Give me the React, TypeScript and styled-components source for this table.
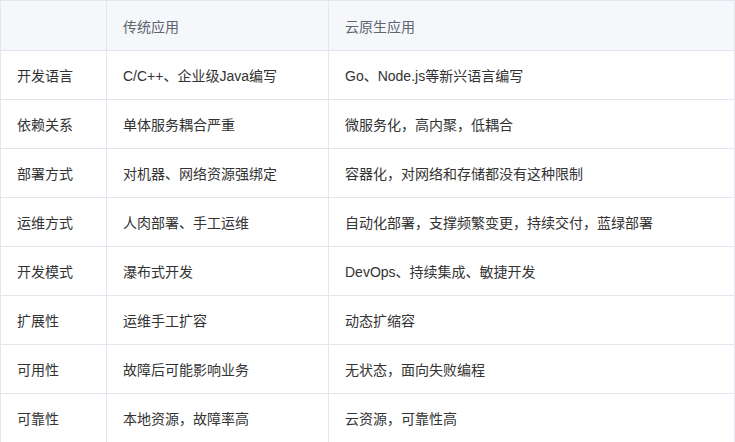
import React from "react";
import styled, { createGlobalStyle } from "styled-components";

const Global = createGlobalStyle`
  html, body { margin: 0; padding: 0; background: #ffffff; }
  body { font-family: "Liberation Sans", "Noto Sans CJK SC", sans-serif; }
`;

const Table = styled.table`
  border-collapse: collapse;
  table-layout: fixed;
  width: 734px;
  font-size: 14px;
  color: #333333;
`;

const Col = styled.col<{ $w: number }>`
  width: ${(p) => p.$w}px;
`;

const HeadCell = styled.th`
  height: 50px;
  padding: 0 16px;
  text-align: left;
  font-weight: normal;
  color: #5e6470;
  background: #f5f7fa;
  border: 1px solid #e3e6ee;
  box-sizing: border-box;
`;

const Cell = styled.td`
  height: 49px;
  padding: 0 16px;
  text-align: left;
  border: 1px solid #e3e6ee;
  box-sizing: border-box;
  white-space: nowrap;
`;

const rows: [string, string, string][] = [
  ["开发语言", "C/C++、企业级Java编写", "Go、Node.js等新兴语言编写"],
  ["依赖关系", "单体服务耦合严重", "微服务化，高内聚，低耦合"],
  ["部署方式", "对机器、网络资源强绑定", "容器化，对网络和存储都没有这种限制"],
  ["运维方式", "人肉部署、手工运维", "自动化部署，支撑频繁变更，持续交付，蓝绿部署"],
  ["开发模式", "瀑布式开发", "DevOps、持续集成、敏捷开发"],
  ["扩展性", "运维手工扩容", "动态扩缩容"],
  ["可用性", "故障后可能影响业务", "无状态，面向失败编程"],
  ["可靠性", "本地资源，故障率高", "云资源，可靠性高"],
];

export default function App() {
  return (
    <>
      <Global />
      <Table>
        <colgroup>
          <Col $w={106} />
          <Col $w={222} />
          <Col $w={406} />
        </colgroup>
        <thead>
          <tr>
            <HeadCell></HeadCell>
            <HeadCell>传统应用</HeadCell>
            <HeadCell>云原生应用</HeadCell>
          </tr>
        </thead>
        <tbody>
          {rows.map((r) => (
            <tr key={r[0]}>
              <Cell>{r[0]}</Cell>
              <Cell>{r[1]}</Cell>
              <Cell>{r[2]}</Cell>
            </tr>
          ))}
        </tbody>
      </Table>
    </>
  );
}
